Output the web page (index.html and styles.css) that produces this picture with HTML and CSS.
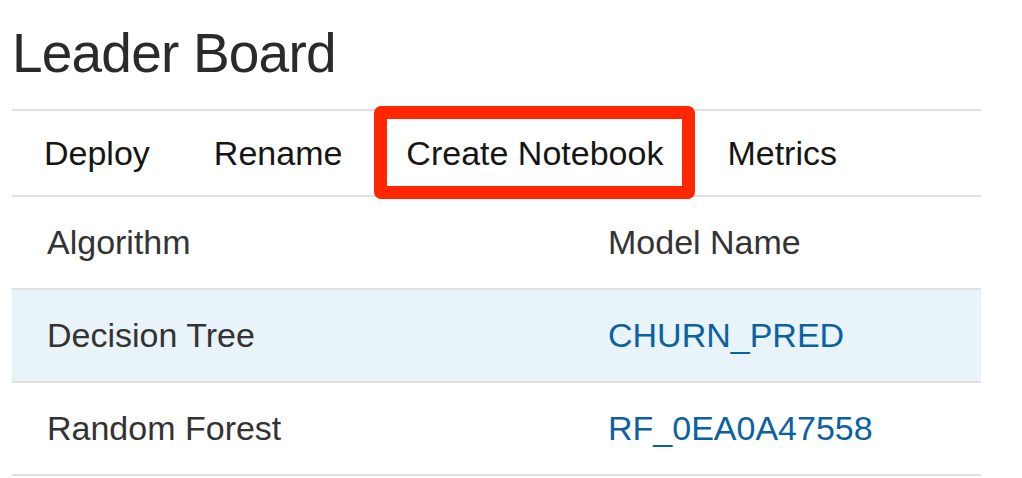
FILE: index.html
```html
<!DOCTYPE html>
<html lang="en">
<head>
<meta charset="utf-8">
<title>Leader Board</title>
<link rel="stylesheet" href="styles.css">
</head>
<body>
<main class="page">
  <h1 class="title">Leader Board</h1>
  <nav class="toolbar">
    <div class="tab">Deploy</div>
    <div class="tab">Rename</div>
    <div class="tab tab-marked">Create Notebook<span class="highlight-box"></span></div>
    <div class="tab">Metrics</div>
  </nav>
  <div class="table">
    <div class="row head">
      <div class="cell">Algorithm</div>
      <div class="cell">Model Name</div>
    </div>
    <div class="row selected">
      <div class="cell">Decision Tree</div>
      <div class="cell"><a class="link" href="#">CHURN_PRED</a></div>
    </div>
    <div class="row">
      <div class="cell">Random Forest</div>
      <div class="cell"><a class="link" href="#">RF_0EA0A47558</a></div>
    </div>
  </div>
</main>
</body>
</html>
```

FILE: styles.css
```css
html, body {
  margin: 0;
  padding: 0;
  background: #ffffff;
}

body {
  font-family: "Liberation Sans", Arial, sans-serif;
}

.page {
  width: 969px;
  margin-left: 12px;
}

.title {
  margin: 0 0 24px 0;
  padding-top: 21px;
  font-size: 55px;
  line-height: 64px;
  font-weight: 400;
  letter-spacing: -0.8px;
  color: #2a2a2a;
}

.toolbar {
  display: flex;
  border-top: 2px solid #e0e0e0;
  border-bottom: 2px solid #e0e0e0;
}

.tab {
  position: relative;
  padding: 0 32px;
  font-size: 34px;
  line-height: 84px;
  color: #161513;
}

.highlight-box {
  position: absolute;
  left: 0;
  right: 0;
  top: -5px;
  bottom: -4px;
  border: 13px solid #ff2600;
  border-radius: 7px;
}

.table {
  display: flex;
  flex-direction: column;
}

.row {
  display: grid;
  grid-template-columns: 561px 1fr;
  border-bottom: 2px solid #e0e0e0;
}

.row.selected {
  background: #e8f3fa;
}

.cell {
  padding-left: 35px;
  font-size: 34px;
  line-height: 91px;
  color: #333333;
}

.link {
  color: #0b62a0;
  text-decoration: none;
}
```
